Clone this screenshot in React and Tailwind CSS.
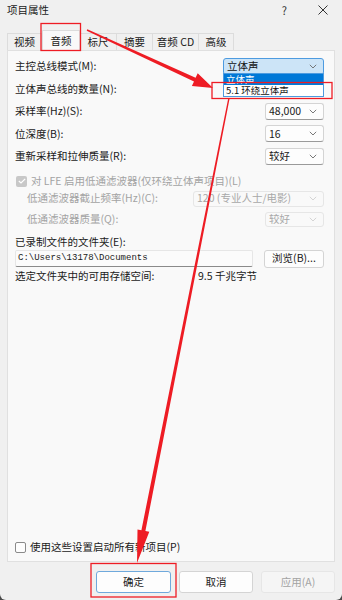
import React from "react";

const FONT = { fontFamily: '"Noto Sans CJK SC", "Noto Sans", sans-serif' };
const MONO = { fontFamily: '"Liberation Mono", "Noto Sans CJK SC", monospace' };

function Chevron({ disabled }) {
  return (
    <svg width="8" height="5" viewBox="0 0 8 5" className="shrink-0">
      <path d="M0.8 0.8 L4 4 L7.2 0.8" fill="none" stroke={disabled ? "#cfcfcf" : "#6a6a6a"} strokeWidth="0.9" />
    </svg>
  );
}

function Select({ text, w, h = "h-[17px]", disabled, focused }) {
  return (
    <div
      className={`${w} ${h} flex items-center justify-between pl-[3px] pr-[6px] rounded-[3px] border text-[10.5px] leading-none ${
        focused
          ? "bg-[#cce4f7] border-[#4d9be0] text-[#111]"
          : disabled
          ? "bg-[#f9f9f9] border-[#e6e6e6] text-[#a8a8a8]"
          : "bg-[#fdfdfd] border-[#d4d4d4] border-b-[#9a9a9a] text-[#1a1a1a]"
      }`}
    >
      {text ? <span>{text}</span> : <span />}
      <Chevron disabled={disabled} />
    </div>
  );
}

function Row({ label, children }) {
  return (
    <div className="h-[22.5px] flex items-center justify-between">
      <span className="text-[10.5px] text-[#1a1a1a] leading-none">{label}</span>
      {children}
    </div>
  );
}

export default function App() {
  return (
    <div className="w-[342px] h-[600px] bg-[#4a4a4a]">
      <div className="relative w-[342px] h-[600px] bg-[#f0f0f0] rounded-b-[6px] overflow-hidden flex flex-col" style={FONT}>
        {/* Title bar */}
        <div className="h-[20px] flex items-center pl-[7px] pr-[14px] shrink-0">
          <span className="text-[10.5px] text-[#1a1a1a] leading-none">项目属性</span>
          <span className="ml-auto mr-[31px] text-[11px] text-[#333] leading-none">?</span>
          <svg width="10" height="10" viewBox="0 0 10 10">
            <path d="M0.5 0.5 L9.5 9.5 M9.5 0.5 L0.5 9.5" stroke="#333" strokeWidth="1" />
          </svg>
        </div>

        {/* Tabs */}
        <div className="mt-[9px] h-[21px] flex items-end px-[7px] shrink-0 relative z-10">
          <div className="h-[17px] w-[35px] flex items-center justify-center border border-b-0 border-[#dcdcdc] bg-[#f0f0f0] text-[10.5px] leading-none text-[#1a1a1a]">视频</div>
          <div className="h-[21px] w-[38px] -mb-px flex items-center justify-center border border-b-0 border-[#dcdcdc] bg-[#f9f9f9] text-[10.5px] leading-none text-[#1a1a1a]">音频</div>
          <div className="h-[17px] w-[37px] flex items-center justify-center border border-l-0 border-b-0 border-[#dcdcdc] bg-[#f0f0f0] text-[10.5px] leading-none text-[#1a1a1a]">标尺</div>
          <div className="h-[17px] w-[36px] flex items-center justify-center border border-l-0 border-b-0 border-[#dcdcdc] bg-[#f0f0f0] text-[10.5px] leading-none text-[#1a1a1a]">摘要</div>
          <div className="h-[17px] w-[46px] flex items-center justify-center border border-l-0 border-b-0 border-[#dcdcdc] bg-[#f0f0f0] text-[10.5px] leading-none text-[#1a1a1a]">音频 CD</div>
          <div className="h-[17px] w-[35px] flex items-center justify-center border border-l-0 border-b-0 border-[#dcdcdc] bg-[#f0f0f0] text-[10.5px] leading-none text-[#1a1a1a]">高级</div>
        </div>

        {/* Panel */}
        <div className="mx-[7px] h-[512px] shrink-0 border border-[#e0e0e0] bg-[#f9f9f9] flex flex-col pl-[7px] pr-[10px] pt-[4px] pb-[6px]">
          <Row label="主控总线模式(M):">
            <Select text="立体声" w="w-[101px]" focused />
          </Row>
          <Row label="立体声总线的数量(N):">
            <Select text="" w="w-[59px]" />
          </Row>
          <Row label="采样率(Hz)(S):">
            <Select text="48,000" w="w-[59px]" />
          </Row>
          <Row label="位深度(B):">
            <Select text="16" w="w-[59px]" />
          </Row>
          <Row label="重新采样和拉伸质量(R):">
            <Select text="较好" w="w-[59px]" />
          </Row>

          <div className="mt-[5px] h-[17px] flex items-center gap-[4px]">
            <div className="w-[11px] h-[11px] ml-[1px] rounded-[2px] bg-[#c8c8c8] flex items-center justify-center">
              <svg width="8" height="6" viewBox="0 0 8 6">
                <path d="M0.8 3 L3 5 L7.2 0.8" fill="none" stroke="#ffffff" strokeWidth="1.2" />
              </svg>
            </div>
            <span className="text-[10.5px] leading-none text-[#a3a3a3]">对 LFE 启用低通滤波器(仅环绕立体声项目)(L)</span>
          </div>

          <div className="mt-[1px] h-[16px] flex items-center justify-between pl-[12px]">
            <span className="text-[10.5px] leading-none text-[#a3a3a3]">低通滤波器截止频率(Hz)(C):</span>
            <Select text="120 (专业人士/电影)" w="w-[131px]" h="h-[16px]" disabled />
          </div>
          <div className="mt-[5px] h-[16px] flex items-center justify-between pl-[12px]">
            <span className="text-[10.5px] leading-none text-[#a3a3a3]">低通滤波器质量(Q):</span>
            <Select text="较好" w="w-[59px]" h="h-[15px]" disabled />
          </div>

          <div className="mt-[7px] h-[16px] flex items-center">
            <span className="text-[10.5px] leading-none text-[#1a1a1a]">已录制文件的文件夹(E):</span>
          </div>
          <div className="-mt-[1px] h-[18px] flex items-center justify-between">
            <div className="w-[238px] h-[17px] flex items-center pl-[2px] bg-[#fbfbfb] border border-[#e6e6e6] border-b-[#8a8a8a] rounded-[2px]">
              <span className="text-[9px] leading-none text-[#1a1a1a]" style={MONO}>C:\Users\13178\Documents</span>
            </div>
            <div className="w-[60px] h-[18px] flex items-center justify-center bg-[#fdfdfd] border border-[#d4d4d4] rounded-[3px] text-[10.5px] leading-none text-[#1a1a1a]">浏览(B)...</div>
          </div>
          <div className="mt-[1px] h-[16px] flex items-center">
            <span className="w-[183px] text-[10.5px] leading-none text-[#1a1a1a]">选定文件夹中的可用存储空间:</span>
            <span className="text-[10.5px] leading-none text-[#1a1a1a]">9.5 千兆字节</span>
          </div>

          <div className="flex-1" />

          <div className="h-[16px] flex items-center gap-[4px]">
            <div className="w-[11px] h-[11px] rounded-[2px] border border-[#8a8a8a] bg-[#fdfdfd]" />
            <span className="text-[10.5px] leading-none text-[#1a1a1a]">使用这些设置启动所有新项目(P)</span>
          </div>
        </div>

        {/* Buttons */}
        <div className="mt-[9px] flex justify-end gap-[8px] pr-[7px]">
          <div className="w-[75px] h-[22px] flex items-center justify-center bg-[#fdfdfd] border border-[#6fa9dc] rounded-[3px] text-[10.5px] leading-none text-[#1a1a1a]">确定</div>
          <div className="w-[74px] h-[22px] flex items-center justify-center bg-[#fdfdfd] border border-[#d4d4d4] rounded-[3px] text-[10.5px] leading-none text-[#1a1a1a]">取消</div>
          <div className="w-[74px] h-[22px] flex items-center justify-center bg-[#f5f5f5] border border-[#e6e6e6] rounded-[3px] text-[10.5px] leading-none text-[#a3a3a3]">应用(A)</div>
        </div>

        {/* Open dropdown list */}
        <div className="absolute left-[223px] top-[73px] w-[101px] h-[24px] bg-white border border-[#4d9be0] flex flex-col z-20">
          <div className="h-[11px] bg-[#0078d7] flex items-center pl-[2px] text-[9.5px] leading-[9px] text-white">立体声</div>
          <div className="h-[11px] flex items-center pl-[2px] text-[9.5px] leading-[9px] text-[#111]">5.1 环绕立体声</div>
        </div>

        {/* Annotations */}
        <svg className="absolute left-0 top-0 z-30 pointer-events-none" width="342" height="600" viewBox="0 0 342 600">
          <rect x="41" y="23.5" width="39.5" height="27" fill="none" stroke="#ee1c24" strokeWidth="1.3" />
          <rect x="212" y="82.5" width="120" height="16" fill="none" stroke="#ee1c24" strokeWidth="1.3" />
          <rect x="91" y="563.5" width="85" height="33.5" fill="none" stroke="#ee1c24" strokeWidth="1.3" />
          <polygon fill="#ee1c24" points="87.3,29.3 195.6,77.8 197.7,73.2 213,88 191.9,86 194,81.4 86.7,30.7" />
          <polygon fill="#ee1c24" points="229.7,98.1 145.4,531 149.3,531.8 137,563 137.5,529.4 141.4,530.2 228.3,97.9" />
        </svg>
      </div>
    </div>
  );
}
